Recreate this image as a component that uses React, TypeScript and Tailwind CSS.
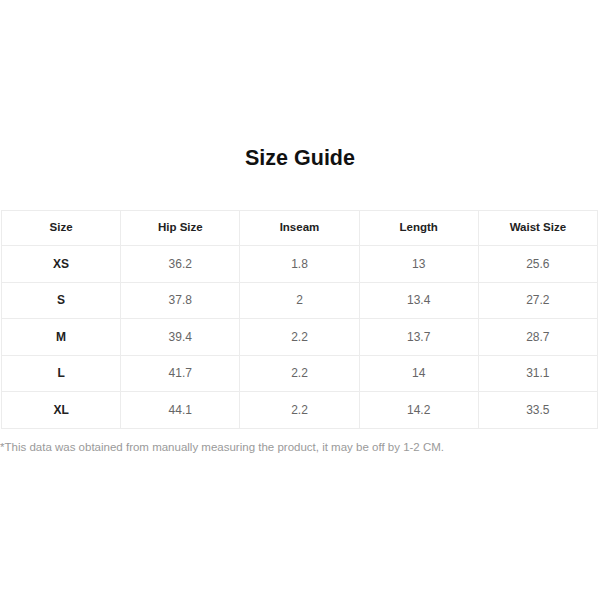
const headers = ["Size", "Hip Size", "Inseam", "Length", "Waist Size"];

const rows: string[][] = [
  ["XS", "36.2", "1.8", "13", "25.6"],
  ["S", "37.8", "2", "13.4", "27.2"],
  ["M", "39.4", "2.2", "13.7", "28.7"],
  ["L", "41.7", "2.2", "14", "31.1"],
  ["XL", "44.1", "2.2", "14.2", "33.5"],
];

export default function App() {
  return (
    <div
      className="w-[600px] h-[600px] bg-white pt-[144px]"
      style={{ fontFamily: '"Liberation Sans", Arial, sans-serif' }}
    >
      <h1 className="text-center text-[21.5px] font-bold text-[#111] leading-[28px]">Size Guide</h1>

      <table className="mt-[38px] ml-[1px] w-[597px] border-collapse table-fixed">
        <thead>
          <tr className="h-[35px]">
            {headers.map((h) => (
              <th key={h} className="border border-[#ececec] text-[11.5px] font-bold text-[#222] text-center">
                {h}
              </th>
            ))}
          </tr>
        </thead>
        <tbody>
          {rows.map((r) => (
            <tr key={r[0]} className="h-[36.5px]">
              {r.map((c, i) => (
                <td
                  key={i}
                  className={
                    i === 0
                      ? "border border-[#ececec] text-[12px] font-bold text-[#222] text-center"
                      : "border border-[#ececec] text-[12px] text-[#666] text-center"
                  }
                >
                  {c}
                </td>
              ))}
            </tr>
          ))}
        </tbody>
      </table>

      <p className="mt-[11px] text-[11.5px] text-[#9a9a9a] leading-[14px]">
        *This data was obtained from manually measuring the product, it may be off by 1-2 CM.
      </p>
    </div>
  );
}
